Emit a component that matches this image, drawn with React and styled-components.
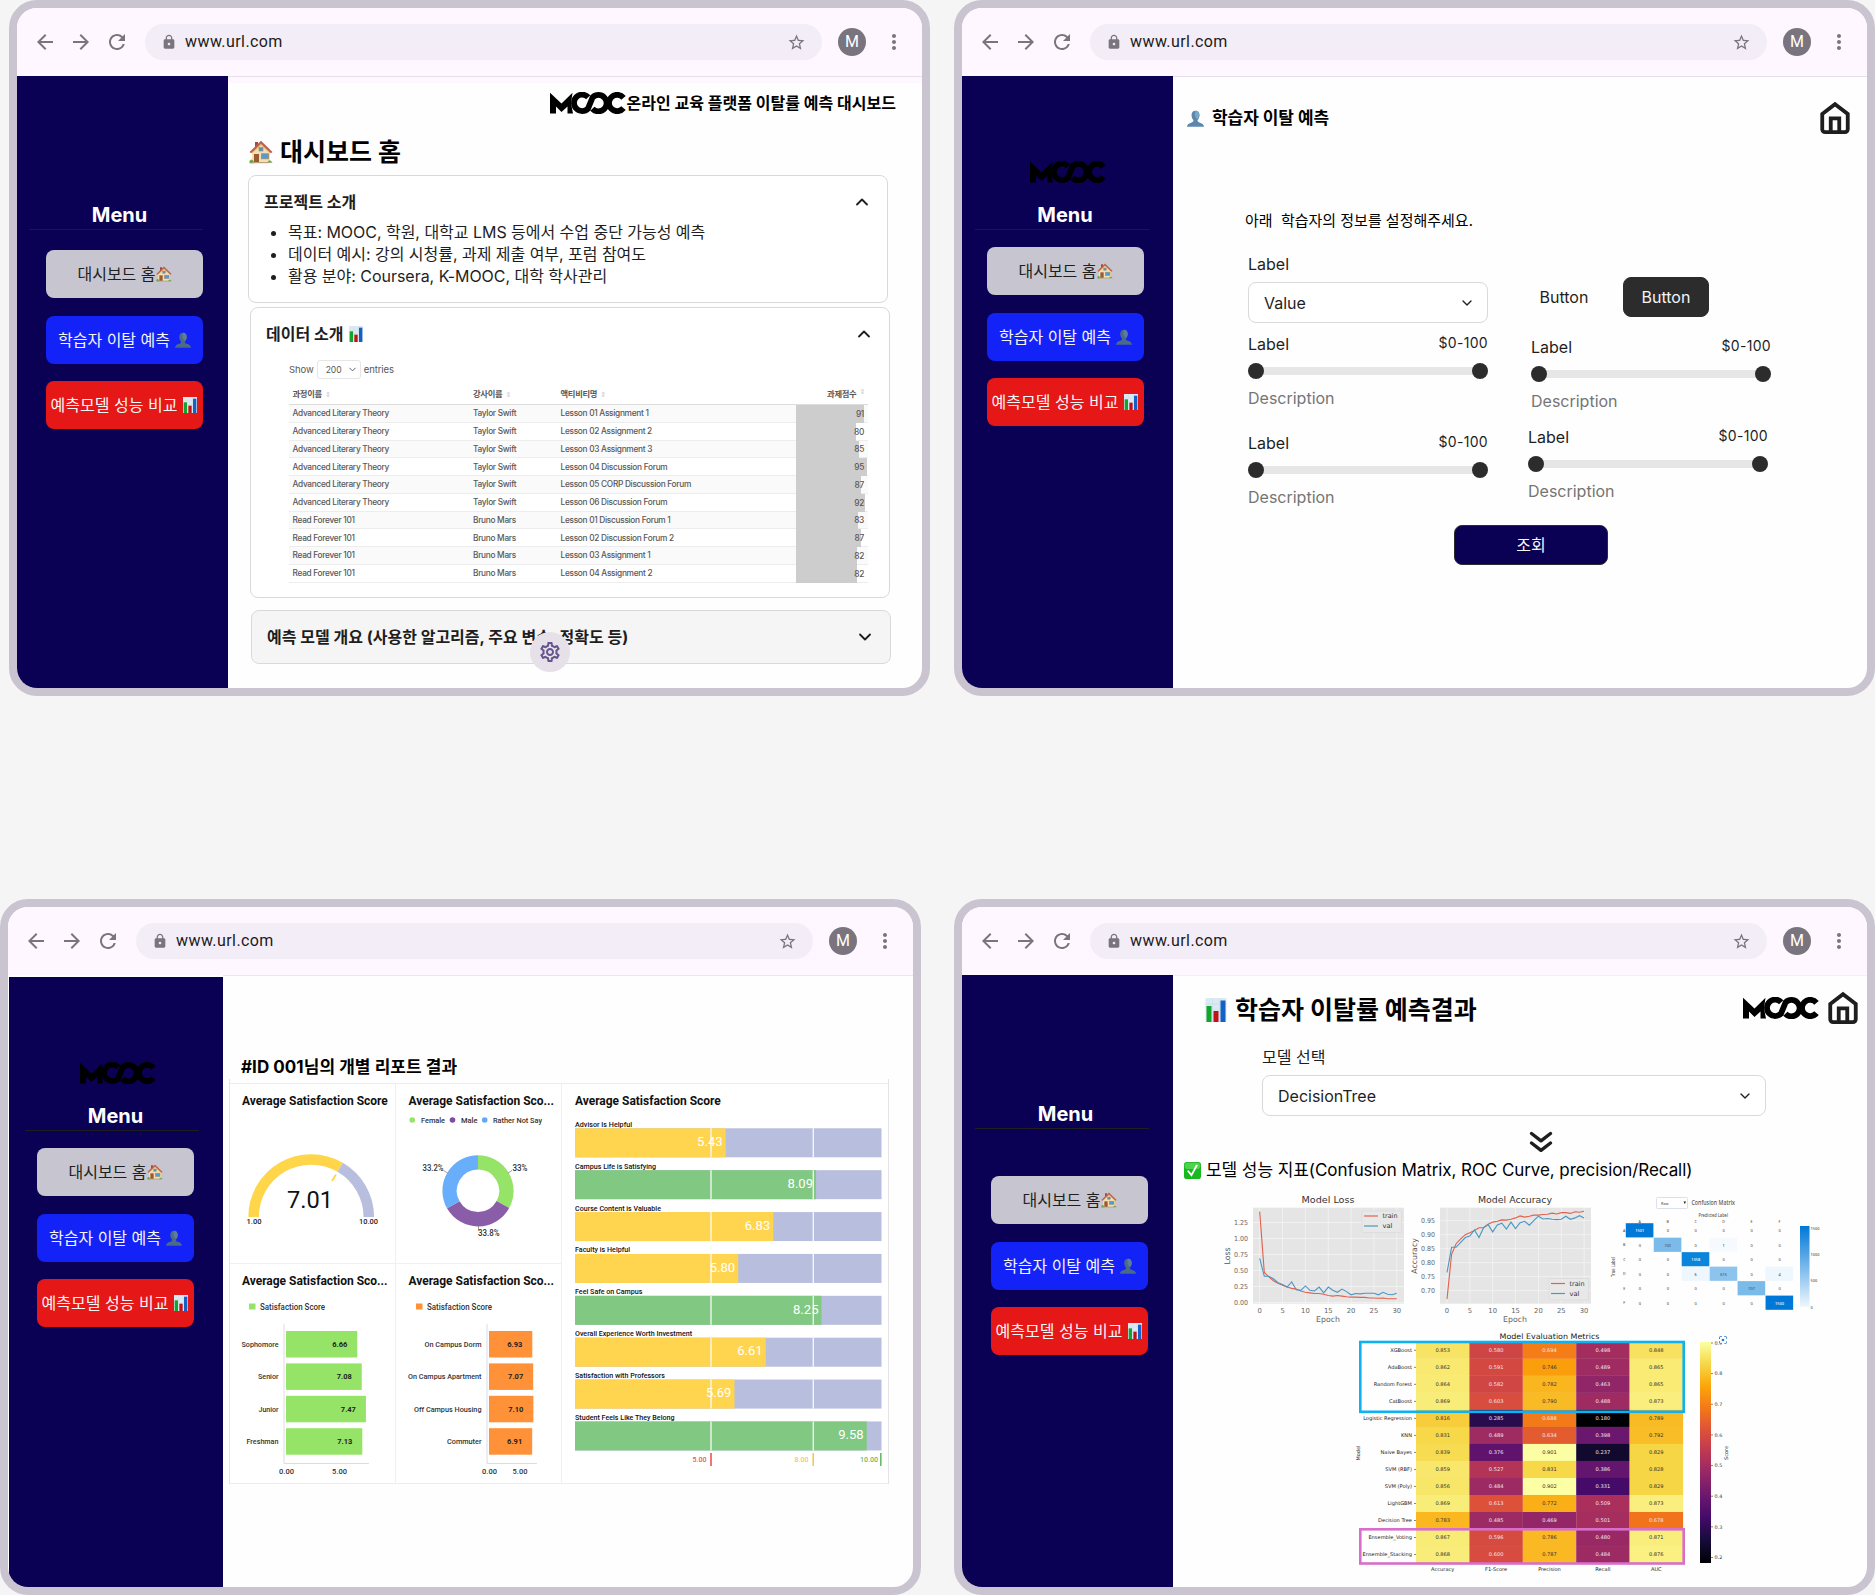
import React from "react";
import styled, { createGlobalStyle } from "styled-components";
import {
  MdArrowBack,
  MdArrowForward,
  MdRefresh,
  MdLock,
  MdStarBorder,
  MdMoreVert,
  MdOutlineSettings,
} from "react-icons/md";
import { ChevronDown, ChevronUp } from "lucide-react";

const NAVY = "#0a0054";

const GlobalStyle = createGlobalStyle`
  * { box-sizing: border-box; }
  body {
    margin: 0;
    background: #f5f5f5;
    color: #1e1e1e;
    font-family: Inter, "Noto Sans CJK KR", sans-serif;
    font-size: 16px;
    overflow: hidden;
  }
`;

/* ---------- canvas and browser window ---------- */

const Canvas = styled.div`
  width: 1875px;
  height: 1595px;
  display: flex;
  flex-direction: column;
  justify-content: space-between;
`;

const CanvasRow = styled.div`
  display: flex;
  justify-content: space-between;
  padding-left: ${(p) => p.$indent || 0}px;
`;

const Frame = styled.section`
  width: 921px;
  height: 696px;
  border: 8px solid #cac4d0;
  border-radius: 28px;
  overflow: hidden;
  background: #fefefe;
  display: flex;
  flex-direction: column;
  flex: none;
`;

const Toolbar = styled.header`
  height: 68px;
  flex: none;
  display: flex;
  align-items: center;
  padding: 0 16px;
  gap: 16px;
  background: #fef7ff;
  color: #79747e;
`;

const NavIcons = styled.div`
  display: flex;
  gap: 12px;
`;

const Address = styled.div`
  flex: 1;
  height: 36px;
  border-radius: 18px;
  background: #f3edf7;
  display: flex;
  align-items: center;
  padding: 0 16.500px 0 16px;
`;

const Url = styled.span`
  flex: 1;
  margin-left: 8px;
  color: #1d1b20;
  font: 400 16px/24px Roboto, sans-serif;
  letter-spacing: 0.42px;
`;

const Avatar = styled.div`
  width: 28px;
  height: 28px;
  border-radius: 50%;
  background: #79747e;
  color: #fff;
  display: flex;
  align-items: center;
  justify-content: center;
  font: 400 16px/28px Roboto, sans-serif;
`;

const Body = styled.div`
  flex: 1;
  display: flex;
  align-items: stretch;
  min-height: 0;
`;

const Main = styled.main`
  flex: 1;
  min-width: 0;
  position: relative;
  display: flex;
  flex-direction: column;
  align-items: flex-start;
  border-top: 1px solid ${(p) => p.$line || "#e7e0ec"};
`;

function Browser({ children }) {
  return (
    <Frame>
      <Toolbar>
        <NavIcons>
          <MdArrowBack size={24} />
          <MdArrowForward size={24} />
          <MdRefresh size={24} />
        </NavIcons>
        <Address>
          <MdLock size={16} />
          <Url>www.url.com</Url>
          <MdStarBorder size={19} />
        </Address>
        <Avatar>M</Avatar>
        <MdMoreVert size={24} />
      </Toolbar>
      <Body>{children}</Body>
    </Frame>
  );
}

/* ---------- pictograms ---------- */

const Glyph = styled.svg`
  flex: none;
  width: ${(p) => p.$w}px;
  height: ${(p) => p.$w}px;
`;

function HouseIcon({ w = 16 }) {
  return (
    <Glyph $w={w} viewBox="0 0 24 24">
      <path d="M6 2h3v7H6z" fill="#a04a3c" />
      <path d="M3 11 12 3l9 8v11H3z" fill="#f3dfb0" />
      <path d="M3 11 12 3l9 8v2.500l-9-8-9 8z" fill="#dcbf85" />
      <path d="M0.5 12 12 0.8 23.5 12l-1.600 1.300L12 3.800 2.100 13.300z" fill="#c0604c" />
      <rect x="5" y="14" width="5" height="8.500" fill="#9a5a34" />
      <rect x="12.500" y="13.800" width="7" height="5" fill="#4f9be0" stroke="#a58a66" strokeWidth="0.800" />
      <rect x="10" y="7.500" width="4" height="3.500" fill="#5b8fc0" stroke="#a58a66" strokeWidth="0.600" />
      <path d="M0.5 21q2-3 4 0l1 2.200H0.5zM18 22.800q2.500-5 5.500 0z" fill="#6aa84a" />
      <rect x="3" y="22" width="17" height="1.200" fill="#b9a27c" />
    </Glyph>
  );
}

function BustIcon({ w = 16, light }) {
  return (
    <Glyph $w={w} viewBox="0 0 24 24">
      <path
        d="M12 1c4 0 5.600 3 5.600 6.500 0 3-1.300 5.600-2.700 7 0 1.700.6 2.400 2.600 3.100C21 18.700 23.600 20 24 23.500H0c.4-3.500 3-4.800 6.500-5.900 2-.7 2.600-1.400 2.600-3.100-1.400-1.400-2.700-4-2.700-7C6.400 4 8 1 12 1z"
        fill={light ? "#5c87ad" : "#4b6a86"}
      />
      <path d="M12 1c4 0 5.600 3 5.600 6.500 0 2-1 4-2 5.500-3 0-6-6-3.600-12z" fill={light ? "#7ba6c6" : "#5d7d98"} />
    </Glyph>
  );
}

function BarsIcon({ w = 16 }) {
  return (
    <Glyph $w={w} viewBox="0 0 24 24">
      <rect x="1.500" width="21" height="24" fill="#dbe9f3" />
      <path d="M1.500 6h21M1.500 12h21M1.500 18h21M8.500 0v24M15.500 0v24" stroke="#cbdce8" strokeWidth="0.700" />
      <rect x="2.500" y="8" width="5" height="16" fill="#12a52b" />
      <rect x="9.500" y="13" width="5" height="11" fill="#c01218" />
      <rect x="16.500" y="2.500" width="5" height="21.500" fill="#1560c4" />
    </Glyph>
  );
}

function CheckIcon({ w = 17 }) {
  return (
    <Glyph $w={w} viewBox="0 0 24 24">
      <rect width="24" height="24" rx="4" fill="#18b820" />
      <rect x="1" y="1" width="22" height="9" rx="4" fill="#4fd24c" />
      <path d="M6 13l4.500 5.500L18 5" fill="none" stroke="#fff" strokeWidth="2.600" strokeLinecap="round" />
    </Glyph>
  );
}

function HomeIcon() {
  return (
    <Glyph $w={34} viewBox="0 0 24 24" fill="none" stroke="#1e1e1e" strokeWidth="2.700">
      <path d="M3 9.200 12 2.300l9 6.900V20a2 2 0 0 1-2 2H5a2 2 0 0 1-2-2z" />
      <path d="M9 22V12.300h6V22" />
    </Glyph>
  );
}

function DoubleChevron() {
  return (
    <svg width="24" height="22" viewBox="0 0 24 22" fill="none" stroke="#1e1e1e" strokeWidth="3.400" strokeLinecap="round" strokeLinejoin="round">
      <path d="M2.500 2.500 12 9.800l9.500-7.300M2.500 12 12 19.300 21.500 12" />
    </svg>
  );
}

const LogoSvg = styled.svg`
  width: 76px;
  height: 22px;
  flex: none;
  display: block;
`;

function Logo() {
  return (
    <LogoSvg viewBox="0 0 76 22" role="img" aria-label="MOOC">
      <path d="M0 .8 11.500 11.500 22.500.8 21 11.500 23 21.600h-5.500V14.500l-6 5.500L6 14.500v7.100H0z" fill="#000" />
      <g fill="none" stroke="#000" strokeWidth="5.800">
        <path d="M38.200 5.300A8.200 8.200 0 1 0 38 16.600L42.600 5.400A8.200 8.200 0 1 1 42.400 16.700" />
        <path d="M73.500 5.800A8.200 8.200 0 1 0 73.500 16.200" />
      </g>
    </LogoSvg>
  );
}

/* ---------- side menu ---------- */

const Side = styled.nav`
  width: ${(p) => p.$width || 211}px;
  flex: none;
  background: ${NAVY};
  margin: ${(p) => p.$inset || "0"};
  display: flex;
  flex-direction: column;
`;

const SideLogo = styled.div`
  height: 107px;
  padding-top: 85px;
  padding-left: ${(p) => p.$x}px;
`;

const SideTitle = styled.h2`
  margin: ${(p) => (p.$logo ? 20 : 127)}px 0 2px;
  width: ${(p) => p.$center * 2}px;
  text-align: center;
  color: #fff;
  font: 700 20px/24px Inter, sans-serif;
`;

const SideRule = styled.hr`
  width: 174px;
  height: 1px;
  border: 0;
  margin: 0 0 ${(p) => p.$gap}px ${(p) => p.$x}px;
  background: #1e1e1e;
`;

const SideButton = styled.button`
  width: 157px;
  height: 48px;
  flex: none;
  margin: 0 0 ${(p) => p.$gap || 0}px ${(p) => p.$x}px;
  padding: 0;
  border: 0;
  border-radius: 8px;
  display: flex;
  align-items: center;
  justify-content: center;
  gap: ${(p) => p.$space || 0}px;
  white-space: nowrap;
  background: ${(p) => p.$bg};
  color: ${(p) => p.$fg || "#f5f5f5"};
  font: 400 16px/22px Inter, "Noto Sans CJK KR", sans-serif;
`;

function SideMenu({ logo, center, rule, buttons, gap, width, inset }) {
  return (
    <Side $width={width} $inset={inset}>
      {logo && (
        <SideLogo $x={logo}>
          <Logo />
        </SideLogo>
      )}
      <SideTitle $logo={!!logo} $center={center}>Menu</SideTitle>
      <SideRule $x={rule} $gap={gap} />
      <SideButton $x={buttons} $gap={18} $bg="#c7c6d0" $fg="#1e1e1e">
        대시보드 홈<HouseIcon />
      </SideButton>
      <SideButton $x={buttons} $gap={17} $bg="#1322f6" $space={5}>
        학습자 이탈 예측 <BustIcon />
      </SideButton>
      <SideButton $x={buttons} $bg="#e51717" $space={5}>
        예측모델 성능 비교 <BarsIcon />
      </SideButton>
    </Side>
  );
}

/* ---------- screen 1: dashboard home ---------- */

const PinkStrip = styled.div`
  width: 100%;
  height: 6px;
  background: #fef7ff;
`;

const BrandRow = styled.div`
  width: 100%;
  height: 39px;
  padding-right: 26px;
  display: flex;
  align-items: center;
  justify-content: flex-end;
  color: #000;
  font: 700 16px/24px "Noto Sans CJK KR", sans-serif;
  letter-spacing: 0.05px;
`;

const BrandText = styled.span`
  padding-bottom: 2px;
`;

const PageTitle = styled.h1`
  margin: ${(p) => p.$m || 0};
  height: 32px;
  display: flex;
  align-items: center;
  gap: ${(p) => p.$gap}px;
  color: #000;
  white-space: nowrap;
  font: 700 25px/32px Inter, "Noto Sans CJK KR", sans-serif;
`;

const Card = styled.article`
  width: 640px;
  height: ${(p) => p.$h}px;
  flex: none;
  margin: ${(p) => p.$m};
  padding: 15px;
  border: 1px solid #d9d9d9;
  border-radius: 8px;
  background: ${(p) => (p.$closed ? "#f5f5f5" : "#fff")};
`;

const CardHead = styled.div`
  height: 22px;
  display: flex;
  align-items: center;
  gap: 5px;
  font: 700 16px/22px Inter, "Noto Sans CJK KR", sans-serif;
  white-space: nowrap;
  & > svg:last-child { margin-left: auto; }
`;

const Bullets = styled.ul`
  margin: 8px 0 0;
  padding-left: 24px;
  line-height: 22px;
  letter-spacing: -0.03px;
`;

const TableBox = styled.div`
  width: 579px;
  margin: 15px 0 0 23px;
  color: #585858;
  font-family: Inter, "Noto Sans CJK KR", sans-serif;
  font-size: 8.3px;
  letter-spacing: -0.29px;
`;

const ShowRow = styled.div`
  height: 19px;
  display: flex;
  align-items: center;
  gap: 3px;
  font-size: 9.5px;
  letter-spacing: -0.08px;
`;

const PageSize = styled.span`
  width: 44px;
  height: 19px;
  border: 1px solid #e6e6e6;
  border-radius: 3px;
  display: flex;
  align-items: center;
  justify-content: space-between;
  padding: 0 2px 0 8px;
  font-size: 8.6px;
`;

const TRow = styled.div`
  display: grid;
  grid-template-columns: 180.500px 87.500px 235.500px 72px;
  padding-left: 3.500px;
  padding-bottom: ${(p) => (p.$head ? 3 : 0)}px;
  align-items: center;
  height: ${(p) => (p.$head ? 21 : 17.75)}px;
  margin-top: ${(p) => (p.$head ? 5 : 0)}px;
  border-bottom: ${(p) => (p.$head ? "1.500px solid #dcdcdc" : "1px solid #ededed")};
  background: ${(p) => (p.$odd ? "#fafafa" : "transparent")};
  font-weight: ${(p) => (p.$head ? 600 : 450)};
`;

const Sort = styled.span`
  color: #c8c8c8;
  font: 400 7px/1 "DejaVu Sans", sans-serif;
  margin-left: 3px;
`;

const Score = styled.span`
  align-self: stretch;
  display: flex;
  align-items: center;
  justify-content: flex-end;
  padding-right: ${(p) => (p.$head ? 3 : 4)}px;
  margin-bottom: ${(p) => (p.$head ? 0 : -1)}px;
`;

const ROWS = [
  ["Advanced Literary Theory", "Taylor Swift", "Lesson 01 Assignment 1", 91],
  ["Advanced Literary Theory", "Taylor Swift", "Lesson 02 Assignment 2", 80],
  ["Advanced Literary Theory", "Taylor Swift", "Lesson 03 Assignment 3", 85],
  ["Advanced Literary Theory", "Taylor Swift", "Lesson 04 Discussion Forum", 95],
  ["Advanced Literary Theory", "Taylor Swift", "Lesson 05 CORP Discussion Forum", 87],
  ["Advanced Literary Theory", "Taylor Swift", "Lesson 06 Discussion Forum", 92],
  ["Read Forever 101", "Bruno Mars", "Lesson 01 Discussion Forum 1", 83],
  ["Read Forever 101", "Bruno Mars", "Lesson 02 Discussion Forum 2", 87],
  ["Read Forever 101", "Bruno Mars", "Lesson 03 Assignment 1", 82],
  ["Read Forever 101", "Bruno Mars", "Lesson 04 Assignment 2", 82],
];

const Fab = styled.button`
  position: absolute;
  left: 302px;
  top: 555px;
  width: 40px;
  height: 40px;
  padding: 0;
  border: 0;
  border-radius: 50%;
  background: #e6e0e9;
  color: #65558f;
  display: flex;
  align-items: center;
  justify-content: center;
`;

function HomeScreen() {
  return (
    <Browser>
      <SideMenu center={102.5} rule={12} buttons={29} gap={20} />
      <Main>
        <PinkStrip />
        <BrandRow>
          <Logo />
          <BrandText>온라인 교육 플랫폼 이탈률 예측 대시보드</BrandText>
        </BrandRow>
        <PageTitle $m="14px 0 0 21px" $gap={7}>
          <HouseIcon w={24} />
          대시보드 홈
        </PageTitle>
        <Card $h={128} $m="7px 0 0 20px">
          <CardHead>
            프로젝트 소개
            <ChevronUp size={20} strokeWidth={2.200} />
          </CardHead>
          <Bullets>
            <li>목표: MOOC, 학원, 대학교 LMS 등에서 수업 중단 가능성 예측</li>
            <li>데이터 예시: 강의 시청률, 과제 제출 여부, 포럼 참여도</li>
            <li>활용 분야: Coursera, K-MOOC, 대학 학사관리</li>
          </Bullets>
        </Card>
        <Card $h={291} $m="4px 0 0 22px">
          <CardHead>
            데이터 소개
            <BarsIcon />
            <ChevronUp size={20} strokeWidth={2.200} />
          </CardHead>
          <TableBox>
            <ShowRow>
              Show
              <PageSize>
                200
                <ChevronDown size={11} />
              </PageSize>
              entries
            </ShowRow>
            <TRow $head>
              <span>과정이름<Sort>⇕</Sort></span>
              <span>강사이름<Sort>⇕</Sort></span>
              <span>액티비티명<Sort>⇕</Sort></span>
              <Score $head>과제점수<Sort>⇕</Sort></Score>
            </TRow>
            {ROWS.map(([course, teacher, activity, score], i) => (
              <TRow key={activity + i} $odd={i % 2 === 0}>
                <span>{course}</span>
                <span>{teacher}</span>
                <span>{activity}</span>
                <Score
                  style={{
                    background: `linear-gradient(90deg, #cdcdcd ${(score * 74.7) / 72}%, transparent 0)`,
                  }}
                >
                  {score}
                </Score>
              </TRow>
            ))}
          </TableBox>
        </Card>
        <Card $h={54} $m="12px 0 0 23px" $closed>
          <CardHead>
            예측 모델 개요 (사용한 알고리즘, 주요 변수, 정확도 등)
            <ChevronDown size={20} strokeWidth={2.200} />
          </CardHead>
        </Card>
        <Fab>
          <MdOutlineSettings size={24} />
        </Fab>
      </Main>
    </Browser>
  );
}

/* ---------- screen 2: prediction form ---------- */

const HeadRow = styled.div`
  width: 100%;
  height: 82px;
  flex: none;
  padding: 0 15px 0 14px;
  display: flex;
  align-items: center;
  justify-content: space-between;
`;

const SmallTitle = styled.h3`
  margin: ${(p) => p.$m || 0};
  display: flex;
  align-items: center;
  gap: 8px;
  color: #000;
  white-space: pre;
  font: 700 17px/24px Inter, "Noto Sans CJK KR", sans-serif;
  letter-spacing: ${(p) => p.$track || -0.05}px;
`;

const Instruction = styled.p`
  margin: 50px 0 22px 72px;
  color: #000;
  white-space: pre;
  font: 400 15px/22px "Noto Sans CJK KR", sans-serif;
  word-spacing: 0.8px;
`;

const Form = styled.form`
  display: flex;
  gap: 43px;
  margin-left: 75px;
`;

const FormColumn = styled.div`
  width: 240px;
  padding-top: ${(p) => p.$top || 0}px;
`;

const FieldLabel = styled.div`
  line-height: 22px;
  height: 22px;
  margin-top: ${(p) => p.$top || 0}px;
  margin-bottom: ${(p) => (p.$tight ? 7 : 8)}px;
  margin-left: ${(p) => p.$x || 0}px;
`;

const Select = styled.div`
  width: ${(p) => p.$w || 240}px;
  height: 41px;
  flex: none;
  margin-left: ${(p) => p.$x || 0}px;
  border: 1px solid #d9d9d9;
  border-radius: 8px;
  background: #fff;
  display: flex;
  align-items: center;
  justify-content: space-between;
  padding: 0 12px 0 15px;
`;

const Slider = styled.div`
  width: 240px;
  margin: ${(p) => p.$m};
`;

const SliderTop = styled.div`
  display: flex;
  justify-content: space-between;
  line-height: 22px;
  height: 22px;
  small { font-size: 14px; line-height: 20px; letter-spacing: 0.3px; }
`;

const Track = styled.div`
  height: 16px;
  margin: 8px 0;
  display: flex;
  align-items: center;
  justify-content: space-between;
  background: linear-gradient(#e6e6e6, #e6e6e6) center / calc(100% - 16px) 8px no-repeat;
`;

const Thumb = styled.span`
  width: 16px;
  height: 16px;
  border-radius: 50%;
  background: #2c2c2c;
`;

const Hint = styled.div`
  line-height: 22px;
  color: #757575;
`;

const ButtonRow = styled.div`
  display: flex;
  align-items: center;
  height: 40px;
  padding-left: 8.500px;
  gap: 34.500px;
`;

const FlatButton = styled.span`
  line-height: 22px;
`;

const DarkButton = styled.button`
  width: 86px;
  height: 40px;
  padding: 0;
  border: 1px solid #2c2c2c;
  border-radius: 8px;
  background: #2c2c2c;
  color: #f5f5f5;
  font: 400 16px/22px Inter, sans-serif;
`;

const Submit = styled.button`
  width: 154px;
  height: 40px;
  margin: 17px 0 0 281px;
  padding: 0 0 2px;
  border: 1px solid #2c2c2c;
  border-radius: 8px;
  background: ${NAVY};
  color: #f5f5f5;
  font: 400 16px/22px "Noto Sans CJK KR", sans-serif;
`;

function RangeField({ m }) {
  return (
    <Slider $m={m}>
      <SliderTop>
        <span>Label</span>
        <small>$0-100</small>
      </SliderTop>
      <Track>
        <Thumb />
        <Thumb />
      </Track>
      <Hint>Description</Hint>
    </Slider>
  );
}

function PredictScreen() {
  return (
    <Browser>
      <SideMenu logo={68} center={103} rule={13} buttons={25} gap={17} />
      <Main>
        <HeadRow>
          <SmallTitle>
            <BustIcon w={17} light />
            학습자 이탈 예측
          </SmallTitle>
          <HomeIcon />
        </HeadRow>
        <Instruction>아래  학습자의 정보를 설정해주세요.</Instruction>
        <Form>
          <FormColumn>
            <FieldLabel $tight>Label</FieldLabel>
            <Select>
              Value
              <ChevronDown size={16} />
            </Select>
            <RangeField m="10px 0 0" />
            <RangeField m="23px 0 0" />
          </FormColumn>
          <FormColumn $top={24}>
            <ButtonRow>
              <FlatButton>Button</FlatButton>
              <DarkButton type="button">Button</DarkButton>
            </ButtonRow>
            <RangeField m="19px 0 0" />
            <RangeField m="14px 0 0 -3px" />
          </FormColumn>
        </Form>
        <Submit>조회</Submit>
      </Main>
    </Browser>
  );
}

/* ---------- charts: shared pieces ---------- */

const Plot = styled.svg`
  display: block;
  flex: none;
  font-family: ${(p) => p.$font || 'Roboto, "Open Sans", sans-serif'};
`;

function T({ x, y, s, len, anchor, fill = "#333", bold, turn, children }) {
  return (
    <text
      x={x}
      y={y + s * 0.36}
      fontSize={s}
      fontWeight={bold ? 700 : s < 10 ? 500 : 400}
      textAnchor={anchor}
      fill={fill}
      textLength={len}
      lengthAdjust="spacingAndGlyphs"
      transform={turn ? `rotate(-90 ${x} ${y})` : undefined}
    >
      {children}
    </text>
  );
}

const polar = (cx, cy, r, deg) => {
  const a = ((deg - 90) * Math.PI) / 180;
  return [cx + r * Math.cos(a), cy + r * Math.sin(a)];
};

function Arc({ cx, cy, r, width, from, to, color }) {
  const [x1, y1] = polar(cx, cy, r, from);
  const [x2, y2] = polar(cx, cy, r, to);
  return (
    <path
      d={`M${x1} ${y1}A${r} ${r} 0 ${to - from > 180 ? 1 : 0} 1 ${x2} ${y2}`}
      stroke={color}
      strokeWidth={width}
      fill="none"
    />
  );
}

/* ---------- screen 3: individual report ---------- */

const Report = styled.div`
  width: 660px;
  margin: 0 0 0 6px;
  padding-top: 4px;
  border: solid #e4e4e6;
  border-width: 0 1px;
`;

const ReportGrid = styled.div`
  display: grid;
  grid-template: 180px 219px / 166px 166px 326px;
  border: solid #ededf0;
  border-width: 1px 0;
`;

const Panel = styled.div`
  background: #fff;
  grid-column: ${(p) => p.$col};
  grid-row: ${(p) => (p.$tall ? "1 / span 2" : p.$row)};
  border-right: ${(p) => (p.$tall ? 0 : "1.500px solid #f0f0f4")};
  border-bottom: ${(p) => (p.$row === 1 ? "1.500px solid #f0f0f4" : 0)};
  overflow: hidden;
`;

const PanelTitle = styled.h4`
  margin: 10px 0 0 ${(p) => p.$x}px;
  font: 700 12px/14px Roboto, sans-serif;
  letter-spacing: -0.02px;
  color: #111;
  white-space: nowrap;
`;

function Gauge() {
  return (
    <Plot width="164" height="154" viewBox="230 1108 164 154">
      <Arc cx={311.2} cy={1217} r={57.6} width={10.500} from={-90} to={30.200} color="#ffd54a" />
      <Arc cx={311.2} cy={1217} r={57.6} width={10.500} from={30.200} to={90} color="#b8bedd" />
      <path d="M332 1181 336 1174.500" stroke="#ffd54a" strokeWidth="1.800" />
      <T x={310} y={1199} s={24} anchor="middle" len={46} fill="#111">7.01</T>
      <T x={246.5} y={1221.500} s={8} len={15} fill="#222">1.00</T>
      <T x={359} y={1221.500} s={8} len={19} fill="#222">10.00</T>
    </Plot>
  );
}

function Donut() {
  const ring = { cx: 478, cy: 1190.8, r: 28.4, width: 14.400 };
  return (
    <Plot width="164" height="154" viewBox="396 1108 164 154">
      <circle cx="412.200" cy="1120" r="2.800" fill="#95e467" />
      <circle cx="452.500" cy="1120" r="2.800" fill="#7b4ea3" />
      <circle cx="484.700" cy="1120" r="2.800" fill="#62a8f8" />
      <T x={421} y={1120} s={7.500} len={24}>Female</T>
      <T x={461} y={1120} s={7.500} len={16.500}>Male</T>
      <T x={493} y={1120} s={7.500} len={49}>Rather Not Say</T>
      <Arc {...ring} from={0} to={118.8} color="#95e467" />
      <Arc {...ring} from={118.8} to={240.5} color="#8a5da8" />
      <Arc {...ring} from={240.5} to={360} color="#68aefa" />
      <path d="M508 1173l4-2.500M447.500 1173l-4-2.500M478.500 1226v4" stroke="#888" strokeWidth="0.800" />
      <T x={512.5} y={1167.500} s={8.500} len={15}>33%</T>
      <T x={422.5} y={1167.500} s={8.500} len={21}>33.2%</T>
      <T x={478} y={1232.500} s={8.500} len={21.500}>33.8%</T>
    </Plot>
  );
}

function BarPanel({ x0, legendX, barX, scale, color, rows, labelX, ticks, axisEnd }) {
  return (
    <Plot width="164" height="194" viewBox={`${x0} 1288 164 194`}>
      <rect x={legendX} y="1303.500" width="6.500" height="6" fill={color} />
      <T x={legendX + 11} y={1307} s={8.200} len={65}>Satisfaction Score</T>
      <path d={`M${barX - 2} 1324V1463.500H${axisEnd}`} stroke="#dcdce4" fill="none" />
      {rows.map(([name, value, len], i) => (
        <g key={name}>
          <rect x={barX} y={1331 + i * 32.400} width={value * scale} height="26.500" fill={color} />
          <T x={labelX} y={1344 + i * 32.400} s={7.800} anchor="end" len={len}>{name}</T>
          <T x={barX + value * scale - 10} y={1344 + i * 32.400} s={7.500} anchor="end" bold fill="#222">
            {value.toFixed(2)}
          </T>
        </g>
      ))}
      <T x={ticks[0]} y={1471} s={7.500} anchor="middle">0.00</T>
      <T x={ticks[1]} y={1471} s={7.500} anchor="middle">5.00</T>
    </Plot>
  );
}

const SCORES = [
  ["Advisor Is Helpful", 5.43, 57],
  ["Campus Life is Satisfying", 8.09, 81],
  ["Course Content is Valuable", 6.83, 86],
  ["Faculty is Helpful", 5.8, 55],
  ["Feel Safe on Campus", 8.25, 67.5],
  ["Overall Experience Worth Investment", 6.61, 117],
  ["Satisfaction with Professors", 5.69, 90],
  ["Student Feels Like They Belong", 9.58, 99.5],
];

function ScoreBars() {
  return (
    <Plot width="326" height="373" viewBox="562 1108 326 373">
      {SCORES.map(([name, value, len], i) => {
        const top = 1128.3 + i * 41.880;
        const w = (value - 1) * 34;
        return (
          <g key={name}>
            <T x={575} y={top - 4.200} s={7.600} len={len} fill="#111">{name}</T>
            <rect x="575" y={top} width="306.500" height="29" fill="#b8bedd" />
            <rect x="575" y={top} width={w} height="29" fill={value > 8 ? "#81c883" : "#ffd54f"} />
            <path d={`M711 ${top}v29M813.300 ${top}v29`} stroke="#fff" strokeOpacity="0.85" strokeWidth="1.400" />
            <T x={575 + w - 3} y={top + 13} s={13} len={25.500} anchor="end" fill="#fff">{value.toFixed(2)}</T>
          </g>
        );
      })}
      <path d="M711 1453v13" stroke="#f0524f" strokeWidth="1.600" />
      <path d="M813.200 1453v13" stroke="#f7c948" strokeWidth="1.600" />
      <path d="M880.800 1453v13" stroke="#66bb6a" strokeWidth="1.600" />
      <T x={692.5} y={1459.500} s={7.500} len={14} fill="#f0524f">5.00</T>
      <T x={794.5} y={1459.500} s={7.500} len={14} fill="#f7c948">8.00</T>
      <T x={860} y={1459.500} s={7.500} len={18} fill="#66bb6a">10.00</T>
    </Plot>
  );
}

function ReportScreen() {
  return (
    <Browser>
      <SideMenu logo={71} center={106.5} rule={16} buttons={28} gap={17} width={214} inset="2px 0 0 1px" />
      <Main $line="#efe3f3">
        <SmallTitle $m="79px 0 0 18px" $track={0.05}>#ID 001님의 개별 리포트 결과</SmallTitle>
        <Report>
          <ReportGrid>
            <Panel $col={1} $row={1}>
              <PanelTitle $x={12}>Average Satisfaction Score</PanelTitle>
              <Gauge />
            </Panel>
            <Panel $col={2} $row={1}>
              <PanelTitle $x={12.5}>Average Satisfaction Sco...</PanelTitle>
              <Donut />
            </Panel>
            <Panel $col={3} $tall>
              <PanelTitle $x={13}>Average Satisfaction Score</PanelTitle>
              <ScoreBars />
            </Panel>
            <Panel $col={1} $row={2}>
              <PanelTitle $x={12}>Average Satisfaction Sco...</PanelTitle>
              <BarPanel
                x0={230}
                legendX={249}
                barX={286}
                scale={10.700}
                color="#95e467"
                labelX={278.5}
                ticks={[286.5, 339.5]}
                axisEnd={369}
                rows={[
                  ["Sophomore", 6.66, 37],
                  ["Senior", 7.08, 20.500],
                  ["Junior", 7.47, 20],
                  ["Freshman", 7.13, 32],
                ]}
              />
            </Panel>
            <Panel $col={2} $row={2}>
              <PanelTitle $x={12.5}>Average Satisfaction Sco...</PanelTitle>
              <BarPanel
                x0={396}
                legendX={416}
                barX={489}
                scale={6.250}
                color="#ff9239"
                labelX={481.5}
                ticks={[489.5, 520]}
                axisEnd={537}
                rows={[
                  ["On Campus Dorm", 6.93, 57],
                  ["On Campus Apartment", 7.07, 73.500],
                  ["Off Campus Housing", 7.1, 67.500],
                  ["Commuter", 6.91, 34.500],
                ]}
              />
            </Panel>
          </ReportGrid>
        </Report>
      </Main>
    </Browser>
  );
}

/* ---------- screen 4: model results ---------- */

const ResultHead = styled.div`
  width: 100%;
  height: 66px;
  flex: none;
  display: flex;
  align-items: center;
  padding: 1px 7px 0 31px;
`;

const HeadActions = styled.div`
  margin: -3px 0 0 auto;
  display: flex;
  align-items: center;
  gap: 7px;
`;

const DownMark = styled.div`
  height: 22px;
  margin: 15px 0 0 355.500px;
`;

const MetricsTitle = styled.p`
  margin: 6px 0 9px 11px;
  height: 22px;
  display: flex;
  align-items: center;
  gap: 5px;
  color: #000;
  white-space: nowrap;
  font: 400 17px/22px Inter, "Noto Sans CJK KR", sans-serif;
  letter-spacing: -0.07px;
`;

const PlotRow = styled.div`
  display: flex;
  margin-left: 47px;
`;

const HeatBox = styled.div`
  margin: 2px 0 0 177px;
`;

const DEJAVU = '"DejaVu Sans", sans-serif';
const LOSS_TRAIN = [1.42, 0.47, 0.4, 0.34, 0.3, 0.27, 0.24, 0.22, 0.21, 0.18, 0.16, 0.15, 0.14, 0.14, 0.13, 0.11, 0.1, 0.11, 0.1, 0.09, 0.085, 0.085, 0.08, 0.08, 0.07, 0.07, 0.065, 0.07, 0.06, 0.06, 0.06];
const LOSS_VAL = [0.69, 0.41, 0.41, 0.37, 0.31, 0.28, 0.24, 0.32, 0.2, 0.19, 0.26, 0.19, 0.18, 0.24, 0.15, 0.24, 0.19, 0.16, 0.21, 0.17, 0.12, 0.14, 0.135, 0.145, 0.145, 0.145, 0.12, 0.16, 0.13, 0.12, 0.145];
const ACC_TRAIN = [0.67, 0.83, 0.868, 0.885, 0.9, 0.907, 0.915, 0.925, 0.925, 0.937, 0.945, 0.948, 0.953, 0.952, 0.955, 0.96, 0.967, 0.963, 0.966, 0.97, 0.97, 0.972, 0.973, 0.977, 0.974, 0.979, 0.979, 0.976, 0.982, 0.98, 0.984];
const ACC_VAL = [0.765, 0.855, 0.855, 0.873, 0.89, 0.895, 0.917, 0.89, 0.925, 0.936, 0.91, 0.935, 0.941, 0.92, 0.945, 0.922, 0.943, 0.948, 0.934, 0.95, 0.966, 0.956, 0.958, 0.955, 0.954, 0.955, 0.966, 0.955, 0.96, 0.968, 0.96];

function EpochPlot({ x0, width, title, yName, yNameX, left, zero, ticks, y, train, val, legend }) {
  const px = (i) => zero + i * 4.570;
  const line = (data) => data.map((v, i) => `${px(i).toFixed(1)},${y(v).toFixed(1)}`).join(" ");
  return (
    <Plot $font={DEJAVU} width={width} height="134" viewBox={`${x0} 1190 ${width} 134`}>
      <rect x={left} y="1207.700" width="151" height="96" fill="#e5e5e5" />
      <T x={left + 75} y={1200} s={9} anchor="middle" len={title.length * 5.300}>{title}</T>
      {ticks.map((t) => (
        <g key={t}>
          <path d={`M${left} ${y(t)}h151`} stroke="#f6f6f6" strokeWidth="0.700" />
          <T x={left - 5} y={y(t)} s={6.800} anchor="end" len={14} fill="#666">{t.toFixed(2)}</T>
        </g>
      ))}
      {[0, 5, 10, 15, 20, 25, 30].map((t) => (
        <g key={t}>
          <path d={`M${px(t)} 1207.700v96`} stroke="#f6f6f6" strokeWidth="0.700" />
          <T x={px(t)} y={1310.3} s={6.800} anchor="middle" fill="#666">{t}</T>
        </g>
      ))}
      <T x={left + 75} y={1319.5} s={7.800} anchor="middle" fill="#666">Epoch</T>
      <T x={yNameX} y={1256} s={7.800} anchor="middle" fill="#555" turn>{yName}</T>
      <polyline points={line(train)} fill="none" stroke="#e2604e" strokeWidth="1.100" />
      <polyline points={line(val)} fill="none" stroke="#4a97c4" strokeWidth="1.100" />
      <rect x={legend[0]} y={legend[1]} width="39.500" height="21.500" rx="1.500" fill="#e8e8e8" stroke="#d6d6d6" strokeWidth="0.600" />
      <path d={`M${legend[0] + 2} ${legend[1] + 5}h14`} stroke="#e2604e" strokeWidth="1.200" />
      <path d={`M${legend[0] + 2} ${legend[1] + 15}h14`} stroke="#4a97c4" strokeWidth="1.200" />
      <T x={legend[0] + 20.500} y={legend[1] + 5} s={6.600} len={15}>train</T>
      <T x={legend[0] + 20.500} y={legend[1] + 15} s={6.600} len={10}>val</T>
    </Plot>
  );
}

const MATRIX = [
  [1501, 0, 0, 0, 0, 0],
  [0, 702, 0, 1, 0, 0],
  [0, 0, 1358, 0, 0, 0],
  [0, 0, 6, 615, 0, 4],
  [0, 0, 0, 0, 707, 0],
  [0, 0, 0, 0, 0, 1500],
];

const cellBlue = (v) => {
  if (v === 0) return "none";
  if (v < 10) return v === 1 ? "#f6faff" : "#eef6fe";
  if (v > 1400) return "#0078d7";
  if (v > 1000) return "#0b84dc";
  return v > 650 ? "#7abbea" : "#8cc4ee";
};

function ConfusionPlot() {
  return (
    <Plot $font={'"Noto Sans", sans-serif'} width="230" height="134" viewBox="1600 1190 230 134">
      <defs>
        <linearGradient id="blues" x2="0" y2="1">
          <stop offset="0" stopColor="#0078d7" />
          <stop offset="1" stopColor="#eff7fe" />
        </linearGradient>
      </defs>
      <rect x="1656.500" y="1197.500" width="31" height="11" rx="1" fill="#fff" stroke="#dde0ea" />
      <T x={1661} y={1203.2} s={3.800} fill="#666">Raw</T>
      <path d="M1683.500 1201.500h2.600l-1.300 2.600z" fill="#222" />
      <T x={1691.5} y={1202.6} s={7} len={43.500} fill="#555">Confusion Matrix</T>
      <T x={1698.5} y={1215} s={4.800} len={29.500} fill="#555">Predicted Label</T>
      <T x={1613.5} y={1267} s={4.800} len={20} anchor="middle" fill="#555" turn>True Label</T>
      {MATRIX.map((row, r) => (
        <g key={r}>
          <T x={1639.8 + r * 27.950} y={1221.3} s={3.600} anchor="middle" fill="#555">{"ABCDEF"[r]}</T>
          <T x={1624.3} y={1230.7 + r * 14.480} s={3.600} anchor="middle" fill="#555">{"ABCDEF"[r]}</T>
          {row.map((v, c) => (
            <g key={c}>
              <rect x={1625.8 + c * 27.950} y={1223.2 + r * 14.480} width="27.600" height="14.200" fill={cellBlue(v)} />
              <T
                x={1639.8 + c * 27.950}
                y={1230.7 + r * 14.480}
                s={3.900}
                anchor="middle"
                fill={v > 1000 ? "#fff" : "#555"}
              >
                {v}
              </T>
            </g>
          ))}
        </g>
      ))}
      <rect x="1800" y="1226" width="9.500" height="81" fill="url(#blues)" />
      {[1500, 1000, 500, 0].map((v, i) => (
        <T key={v} x={1810.5} y={1228.5 + i * 26.200} s={3.900} fill="#555">{v}</T>
      ))}
    </Plot>
  );
}

const INFERNO = [
  [0, 0, 4], [22, 11, 57], [66, 10, 104], [106, 23, 110], [147, 38, 103], [188, 55, 84],
  [221, 81, 58], [243, 120, 25], [252, 165, 10], [246, 215, 70], [252, 255, 164],
];

const inferno = (v) => {
  const t = Math.max(0, Math.min(1, (v - 0.18) / 0.722)) * 10;
  const i = Math.min(9, Math.floor(t));
  const mix = INFERNO[i].map((c, k) => Math.round(c + (INFERNO[i + 1][k] - c) * (t - i)));
  return `rgb(${mix.join(",")})`;
};

const METRICS = [
  ["XGBoost", 0.853, 0.58, 0.694, 0.498, 0.848],
  ["AdaBoost", 0.862, 0.591, 0.746, 0.489, 0.865],
  ["Random Forest", 0.864, 0.582, 0.782, 0.463, 0.865],
  ["CatBoost", 0.869, 0.603, 0.79, 0.488, 0.873],
  ["Logistic Regression", 0.816, 0.285, 0.688, 0.18, 0.789],
  ["KNN", 0.831, 0.489, 0.634, 0.398, 0.792],
  ["Naive Bayes", 0.839, 0.376, 0.901, 0.237, 0.829],
  ["SVM (RBF)", 0.859, 0.527, 0.831, 0.386, 0.828],
  ["SVM (Poly)", 0.856, 0.484, 0.902, 0.331, 0.829],
  ["LightGBM", 0.869, 0.613, 0.772, 0.509, 0.873],
  ["Decision Tree", 0.783, 0.485, 0.469, 0.501, 0.678],
  ["Ensemble_Voting", 0.867, 0.596, 0.786, 0.48, 0.871],
  ["Ensemble_Stacking", 0.868, 0.6, 0.787, 0.484, 0.876],
];

function Heatmap() {
  return (
    <Plot $font={DEJAVU} width="385" height="250" viewBox="1350 1326 385 250">
      <defs>
        <linearGradient id="inferno" x2="0" y2="1">
          {INFERNO.map((c, i) => (
            <stop key={i} offset={1 - i / 10} stopColor={`rgb(${c.join(",")})`} />
          )).reverse()}
        </linearGradient>
      </defs>
      <T x={1549.5} y={1336.5} s={7.600} anchor="middle" len={100} fill="#222">Model Evaluation Metrics</T>
      {METRICS.map(([name, ...values], r) => {
        const cy = 1350.3 + r * 17.020;
        return (
          <g key={name}>
            <T x={1412} y={cy} s={5.100} anchor="end" fill="#222">{name}</T>
            <path d={`M1414 ${cy}h2`} stroke="#333" strokeWidth="0.600" />
            {values.map((v, c) => (
              <g key={c}>
                <rect x={1416 + c * 53.400} y={cy - 8.510} width="53.500" height="17.100" fill={inferno(v)} />
                <T x={1442.7 + c * 53.400} y={cy} s={5.100} anchor="middle" fill={v > 0.72 ? "#333" : "#f2e6e6"}>
                  {v.toFixed(3)}
                </T>
              </g>
            ))}
          </g>
        );
      })}
      {["Accuracy", "F1-Score", "Precision", "Recall", "AUC"].map((n, c) => (
        <T key={n} x={1442.7 + c * 53.400} y={1569} s={5.100} anchor="middle" fill="#222">{n}</T>
      ))}
      <T x={1358.7} y={1453} s={5} anchor="middle" turn>Model</T>
      <rect x="1360.300" y="1342" width="323.400" height="69.800" fill="none" stroke="#0cb2f2" strokeWidth="2.600" />
      <rect x="1360.300" y="1529.300" width="323.400" height="34.200" fill="none" stroke="#d86dcb" strokeWidth="2.600" />
      <rect x="1700" y="1342" width="11" height="221" fill="url(#inferno)" />
      {[0.9, 0.8, 0.7, 0.6, 0.5, 0.4, 0.3, 0.2].map((v, i) => (
        <g key={v}>
          <path d={`M1711 ${1343 + i * 30.640}h2`} stroke="#333" strokeWidth="0.600" />
          <T x={1714.5} y={1343 + i * 30.640} s={4.900}>{v.toFixed(1)}</T>
        </g>
      ))}
      <T x={1726.5} y={1453} s={5} anchor="middle" turn>Score</T>
      <circle cx="1723" cy="1340" r="5" fill="#fff" fillOpacity="0.8" />
      <path
        d="M1719.500 1339v-1.500a1 1 0 0 1 1-1h1.300M1724.300 1336.500h1.300a1 1 0 0 1 1 1v1.300M1726.500 1341.500v1a1 1 0 0 1-1 1h-1M1721.800 1343.500h-1.300a1 1 0 0 1-1-1v-1.300"
        stroke="#2b78c8"
        strokeWidth="1"
        fill="none"
      />
      <circle cx="1723" cy="1340" r="1.300" fill="#2b78c8" />
    </Plot>
  );
}

function ResultScreen() {
  return (
    <Browser>
      <SideMenu center={103.5} rule={13} buttons={29} gap={47} />
      <Main $line="#f6ecfa">
        <ResultHead>
          <PageTitle $gap={7}>
            <BarsIcon w={24} />
            학습자 이탈률 예측결과
          </PageTitle>
          <HeadActions>
            <Logo />
            <HomeIcon />
          </HeadActions>
        </ResultHead>
        <FieldLabel $x={89} $top={4} $tight>모델 선택</FieldLabel>
        <Select $w={504} $x={89}>
          DecisionTree
          <ChevronDown size={16} />
        </Select>
        <DownMark>
          <DoubleChevron />
        </DownMark>
        <MetricsTitle>
          <CheckIcon />
          모델 성능 지표(Confusion Matrix, ROC Curve, precision/Recall)
        </MetricsTitle>
        <PlotRow>
          <EpochPlot
            x0={1220}
            width={190}
            title="Model Loss"
            yName="Loss"
            yNameX={1227}
            left={1253}
            zero={1259.7}
            ticks={[0, 0.25, 0.5, 0.75, 1, 1.25]}
            y={(v) => 1302.5 - v * 64}
            train={LOSS_TRAIN}
            val={LOSS_VAL}
            legend={[1362, 1211]}
          />
          <EpochPlot
            x0={1410}
            width={190}
            title="Model Accuracy"
            yName="Accuracy"
            yNameX={1414}
            left={1440}
            zero={1447}
            ticks={[0.7, 0.75, 0.8, 0.85, 0.9, 0.95]}
            y={(v) => 1290.7 - (v - 0.7) * 280}
            train={ACC_TRAIN}
            val={ACC_VAL}
            legend={[1549, 1278.5]}
          />
          <ConfusionPlot />
        </PlotRow>
        <HeatBox>
          <Heatmap />
        </HeatBox>
      </Main>
    </Browser>
  );
}

export default function App() {
  return (
    <>
      <GlobalStyle />
      <Canvas>
        <CanvasRow $indent={9}>
          <HomeScreen />
          <PredictScreen />
        </CanvasRow>
        <CanvasRow>
          <ReportScreen />
          <ResultScreen />
        </CanvasRow>
      </Canvas>
    </>
  );
}
